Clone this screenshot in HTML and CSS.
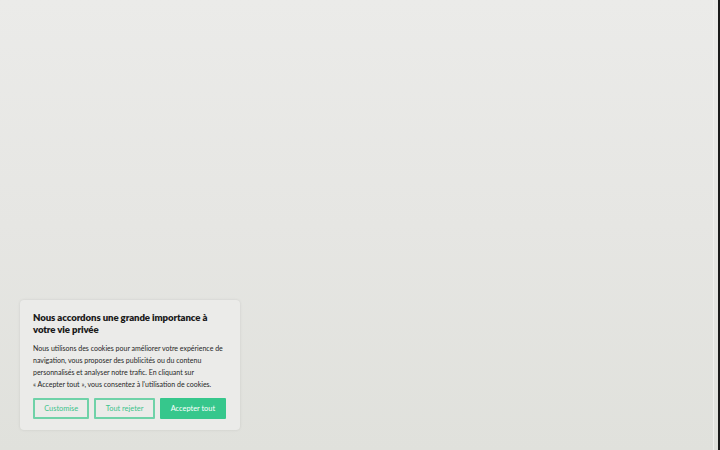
FILE: index.html
```html
<!DOCTYPE html>
<html lang="fr">
<head>
<meta charset="utf-8">
<title>Cookies</title>
<link rel="stylesheet" href="styles.css">
</head>
<body>
<div class="page">
  <main class="content">
    <section class="cookie-card">
      <h2 class="cookie-title">Nous accordons une grande importance à votre vie privée</h2>
      <p class="cookie-text">Nous utilisons des cookies pour améliorer votre expérience de navigation, vous proposer des publicités ou du contenu personnalisés et analyser notre trafic. En cliquant sur <span class="nowrap">« Accepter tout »</span>, vous consentez à l'utilisation de cookies.</p>
      <div class="cookie-actions">
        <button class="btn btn-outline btn-customise">Customise</button>
        <button class="btn btn-outline btn-reject">Tout rejeter</button>
        <button class="btn btn-solid">Accepter tout</button>
      </div>
    </section>
  </main>
  <div class="edge"></div>
</div>
</body>
</html>
```
FILE: styles.css
```css
html, body {
  margin: 0;
  padding: 0;
  height: 100%;
}
body {
  font-family: "Lato", "Noto Sans", sans-serif;
  background: linear-gradient(180deg, #ebebe9 0%, #e6e6e3 50%, #e0e1dc 100%);
}
.page {
  display: flex;
  height: 450px;
}
.content {
  flex: 1;
  display: flex;
  flex-direction: column;
  justify-content: flex-end;
  padding: 0 0 20px 20px;
  border-right: 1px solid #f0f0ee;
  margin-right: 4px;
}
.edge {
  width: 2px;
  background: #1a1a1a;
}
.cookie-card {
  width: 220px;
  box-sizing: border-box;
  background: #ebebe9;
  border-radius: 4px;
  box-shadow: 0 0 3px rgba(0,0,0,0.10);
  padding: 12px 14px 11px 13px;
}
.cookie-title {
  margin: 0;
  font-size: 9.6px;
  line-height: 12px;
  font-weight: 800;
  color: #1a1a1a;
  letter-spacing: -0.1px;
}
.cookie-text {
  margin: 6px 0 8px;
  font-size: 7px;
  line-height: 12px;
  color: #262626;
}
.nowrap {
  white-space: nowrap;
}
.cookie-actions {
  display: flex;
  gap: 5px;
}
.btn {
  height: 21px;
  box-sizing: border-box;
  font-family: inherit;
  font-size: 7.4px;
  border-radius: 1px;
  padding: 0;
  cursor: pointer;
}
.btn-outline {
  background: transparent;
  border: 2px solid #6fd2a8;
  color: #3cc38b;
}
.btn-customise { width: 57px; }
.btn-reject { width: 61px; }
.btn-solid {
  width: 67px;
  background: #36c78c;
  border: 2px solid #36c78c;
  color: #ffffff;
}
```
